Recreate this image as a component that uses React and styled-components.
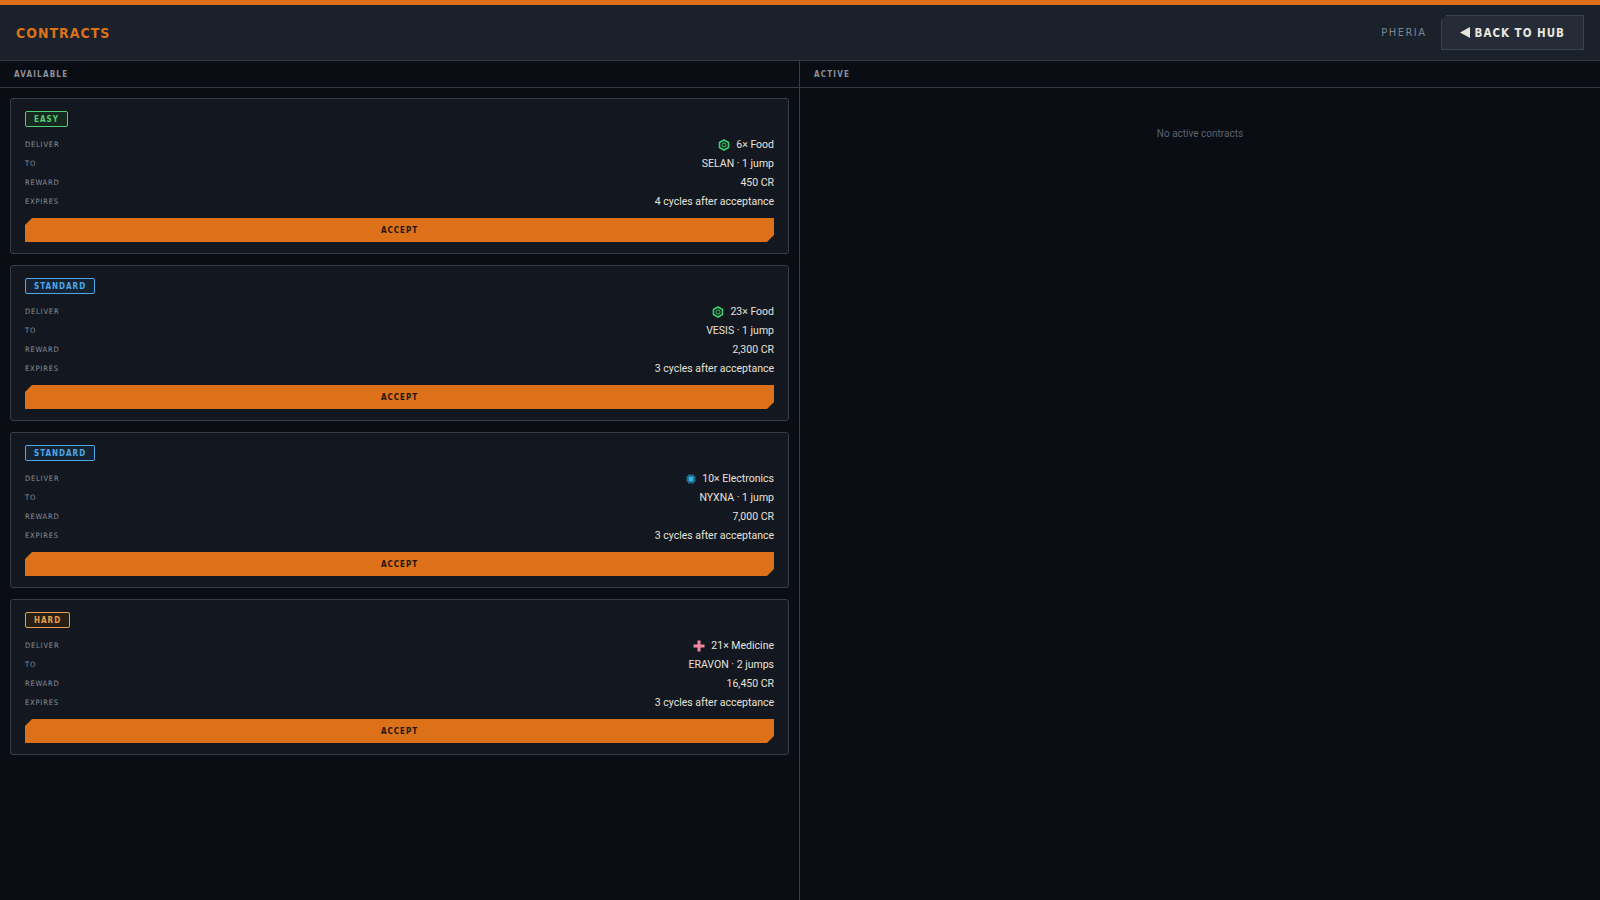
import React from "react";
import styled, { createGlobalStyle } from "styled-components";

const Global = createGlobalStyle`
  html, body { margin: 0; padding: 0; background: #0a0d14; }
  body { font-family: "Roboto", "Liberation Sans", sans-serif; }
  #root { min-height: 900px; }
`;
const Page = styled.div`
  height: 900px; display: flex; flex-direction: column; background: #0a0d14;
  border-top: 5px solid #dc7119; box-sizing: border-box;
`;
const Header = styled.header`
  height: 55px; flex-shrink: 0; background: #1b212b; border-bottom: 1px solid #353c47;
  display: flex; align-items: center; justify-content: space-between; padding: 0 16px;
`;
const Title = styled.h1`
  margin: 0; font-family: "DejaVu Sans Condensed", sans-serif; font-weight: 700;
  font-size: 14px; letter-spacing: 1px; color: #dc7119;
`;
const Right = styled.div`display: flex; align-items: center; gap: 14px;`;
const Loc = styled.span`
  font-family: "DejaVu Sans Condensed", sans-serif; font-size: 11px; letter-spacing: 1.5px; color: #7d8590;
`;
const Back = styled.button`
  height: 35px; padding: 0 18px; background: #252c37; border: 1px solid #3b4350;
  color: #e9e6dc; font-family: "DejaVu Sans Condensed", sans-serif; font-weight: 700;
  font-size: 11.5px; letter-spacing: 1px; display: flex; align-items: center; gap: 5px;
  clip-path: polygon(6px 0, 100% 0, 100% 100%, 0 100%, 0 6px);
`;
const Body = styled.div`flex: 1; display: grid; grid-template-columns: 800px 1fr; min-height: 0;`;
const Panel = styled.section`
  display: flex; flex-direction: column; border-right: ${p => p.$border ? "1px solid #353c47" : "none"};
`;
const PanelHead = styled.div`
  height: 26px; flex-shrink: 0; display: flex; align-items: center; padding: 0 14px;
  border-bottom: 1px solid #353c47; font-family: "DejaVu Sans Condensed", sans-serif;
  font-weight: 700; font-size: 8px; letter-spacing: 1.2px; color: #8a919b;
`;
const List = styled.div`padding: 10px; display: flex; flex-direction: column; gap: 11px;`;
const Card = styled.div`
  background: #131720; border: 1px solid #363d48; border-radius: 3px; padding: 12px 14px 11px;
  display: flex; flex-direction: column;
`;
const tone = { EASY: ["#4fcf78", "#17281f"], STANDARD: ["#4ea7e6", "#152232"], HARD: ["#e8a04a", "#2a1f14"] };
const Badge = styled.span`
  align-self: flex-start; height: 16px; box-sizing: border-box; padding: 0 8px; display: flex; align-items: center;
  border: 1px solid ${p => tone[p.$k][0]}; background: ${p => tone[p.$k][1]}; color: ${p => tone[p.$k][0]};
  border-radius: 2px; font-family: "DejaVu Sans Condensed", sans-serif; font-weight: 700; font-size: 8px; letter-spacing: 1px;
  margin-bottom: 8px;
`;
const Row = styled.div`height: 19px; display: flex; align-items: center; justify-content: space-between;`;
const Label = styled.span`
  font-family: "DejaVu Sans Condensed", sans-serif; font-size: 7.5px; letter-spacing: 0.8px; color: #8a8f96;
`;
const Val = styled.span`
  font-family: "Roboto", sans-serif; font-size: 10.5px; color: #e6e3da; display: flex; align-items: center; gap: 6px;
`;
const Accept = styled.button`
  margin-top: 7px; height: 24px; border: none; background: #dc7119; color: #1b140d;
  font-family: "DejaVu Sans Condensed", sans-serif; font-weight: 700; font-size: 8px; letter-spacing: 1px;
  clip-path: polygon(7px 0, 100% 0, 100% calc(100% - 7px), calc(100% - 7px) 100%, 0 100%, 0 7px);
`;
const Empty = styled.div`
  text-align: center; margin-top: 40px; font-size: 10px; color: #5b626c;
`;

const Hex = () => (
  <svg width="12" height="12" viewBox="0 0 12 12"><path d="M6 1 L10.5 3.5 V8.5 L6 11 L1.5 8.5 V3.5 Z" fill="none" stroke="#3ccf6e" strokeWidth="1.6"/><circle cx="6" cy="6" r="2" fill="none" stroke="#3ccf6e" strokeWidth="1"/></svg>
);
const Chip = () => (
  <svg width="10" height="10" viewBox="0 0 10 10"><rect x="2.5" y="2.5" width="5" height="5" fill="#2fb6ee"/>{[3,5,7].map(v => <g key={v} stroke="#2fb6ee" strokeWidth="1"><line x1={v} y1="0.5" x2={v} y2="2.5"/><line x1={v} y1="7.5" x2={v} y2="9.5"/><line y1={v} x1="0.5" y2={v} x2="2.5"/><line y1={v} x1="7.5" y2={v} x2="9.5"/></g>)}</svg>
);
const Cross = () => (
  <svg width="12" height="12" viewBox="0 0 12 12"><path d="M4.5 0.5h3v4h4v3h-4v4h-3v-4h-4v-3h4z" fill="#f08aa0"/></svg>
);

const data = [
  { k: "EASY", icon: <Hex />, item: "6× Food", to: "SELAN · 1 jump", r: "450 CR", e: "4 cycles after acceptance" },
  { k: "STANDARD", icon: <Hex />, item: "23× Food", to: "VESIS · 1 jump", r: "2,300 CR", e: "3 cycles after acceptance" },
  { k: "STANDARD", icon: <Chip />, item: "10× Electronics", to: "NYXNA · 1 jump", r: "7,000 CR", e: "3 cycles after acceptance" },
  { k: "HARD", icon: <Cross />, item: "21× Medicine", to: "ERAVON · 2 jumps", r: "16,450 CR", e: "3 cycles after acceptance" },
];

export default function App() {
  return (
    <>
      <Global />
      <Page>
        <Header>
          <Title>CONTRACTS</Title>
          <Right>
            <Loc>PHERIA</Loc>
            <Back><svg width="10" height="11" viewBox="0 0 10 11"><path d="M10 0 V11 L0 5.5Z" fill="#e9e6dc"/></svg>BACK TO HUB</Back>
          </Right>
        </Header>
        <Body>
          <Panel $border>
            <PanelHead>AVAILABLE</PanelHead>
            <List>
              {data.map((d, i) => (
                <Card key={i}>
                  <Badge $k={d.k}>{d.k}</Badge>
                  <Row><Label>DELIVER</Label><Val>{d.icon}{d.item}</Val></Row>
                  <Row><Label>TO</Label><Val>{d.to}</Val></Row>
                  <Row><Label>REWARD</Label><Val>{d.r}</Val></Row>
                  <Row><Label>EXPIRES</Label><Val>{d.e}</Val></Row>
                  <Accept>ACCEPT</Accept>
                </Card>
              ))}
            </List>
          </Panel>
          <Panel>
            <PanelHead>ACTIVE</PanelHead>
            <Empty>No active contracts</Empty>
          </Panel>
        </Body>
      </Page>
    </>
  );
}
